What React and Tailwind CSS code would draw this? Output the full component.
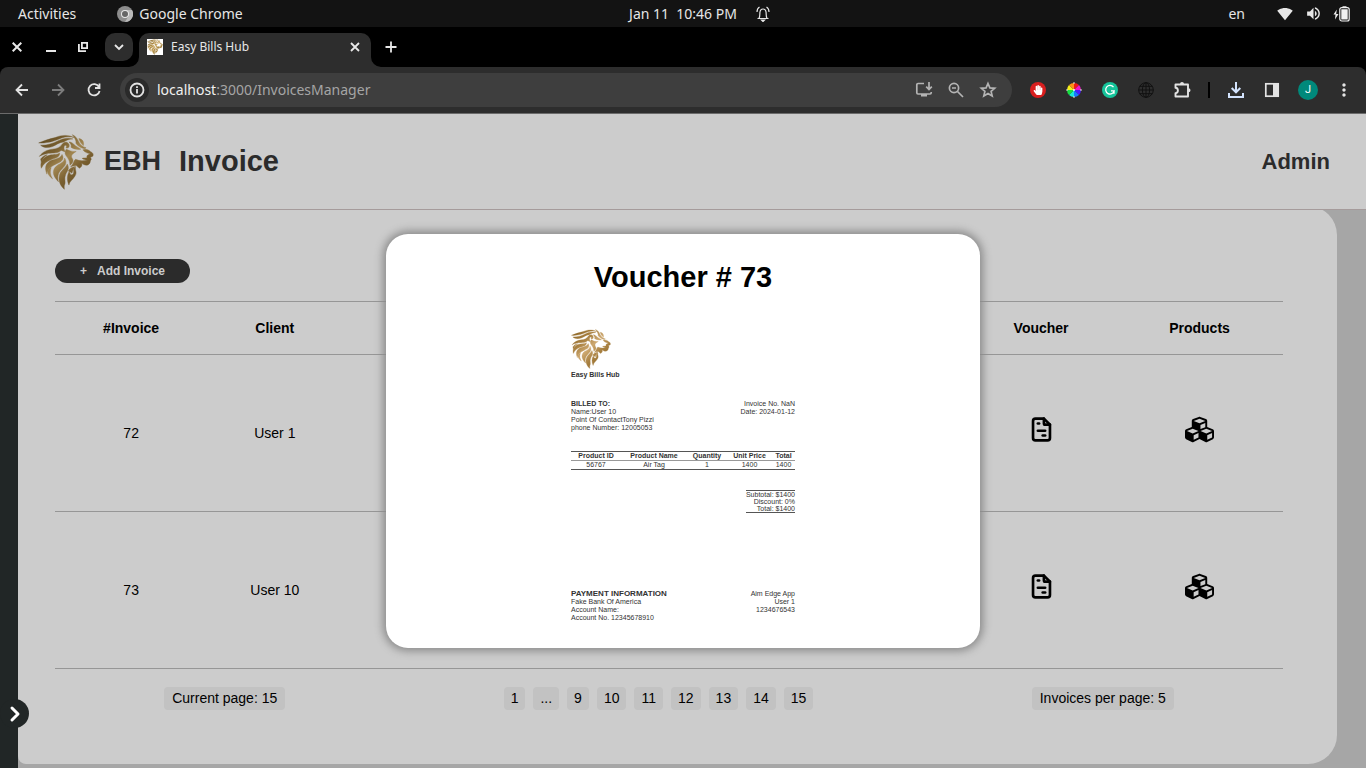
import React from "react";
import { MdMoreVert, MdSignalWifi4Bar, MdVolumeUp } from "react-icons/md";
import { FaCubes, FaHandPaper } from "react-icons/fa";
import { TbFileInvoice } from "react-icons/tb";
import { FiChevronRight } from "react-icons/fi";

const pages = ["1", "...", "9", "10", "11", "12", "13", "14", "15"];
const invoices = [
  { id: 72, client: "User 1" },
  { id: 73, client: "User 10" },
];

const glyphs = {
  back: "M14 8H3M8 2.500 2.500 8 8 13.500",
  forward: "M2 8h11M8 2.500 13.500 8 8 13.500",
  reload: "M13 5A5.600 5.600 0 1 0 13.600 9M13.500 1.500V6H9",
  info: "M8 1.500a6.500 6.500 0 1 0 0 13a6.500 6.500 0 0 0 0-13ZM8 7v4.500M8 4.300v1.700",
  close: "M4 4l8 8M12 4l-8 8",
  plus: "M8 2.500v11M2.500 8h11",
  down: "M4 6l4 4 4-4",
};

function Glyph({ name, className = "size-4" }) {
  return (
    <svg viewBox="0 0 16 16" className={className} fill="none" stroke="currentColor" strokeWidth="1.8" aria-hidden="true">
      <path d={glyphs[name]} />
    </svg>
  );
}

function Lion({ className, id, dark, mid, light }) {
  return (
    <svg viewBox="40 26 170 170" className={className} aria-hidden="true">
      <defs>
        <linearGradient id={id} gradientUnits="userSpaceOnUse" x1="40" y1="40" x2="180" y2="190">
          <stop offset="0" stopColor={dark} />
          <stop offset="0.3" stopColor={mid} />
          <stop offset="0.5" stopColor={light} />
          <stop offset="0.7" stopColor={mid} />
          <stop offset="1" stopColor={dark} />
        </linearGradient>
      </defs>
      <g fill={`url(#${id})`} stroke={`url(#${id})`} strokeWidth="1.2" strokeLinejoin="round">
        <path d="M42 53C60 46 74 41 92 37C112 28 134 28 150 37C138 33 124 34 112 38C96 44 84 50 66 52C56 54 49 54 42 53Z" />
        <path d="M48 60C66 61 84 55 100 47C112 41 130 36 146 41C134 41 124 46 118 50C104 51 94 60 84 64C70 69 56 68 48 60Z" />
        <path d="M44 94C54 80 68 74 84 72C98 71 108 66 114 56C120 49 130 49 134 57C137 65 132 71 125 68C128 64 127 59 122 60C117 64 118 73 123 80C114 78 111 74 109 77C98 87 80 82 66 86C56 88 49 91 44 94Z" />
        <path d="M144 28C154 32 160 40 164 50C168 58 176 65 186 68L182 71C170 69 160 62 155 54C157 47 151 36 144 28Z" />
        <path d="M164 40C176 42 180 50 178 61C172 57 167 50 164 40Z" />
        <path d="M134 50C142 50 148 56 154 62L170 72C160 74 148 72 140 66C143 61 139 55 134 50Z" />
        <path d="M176 74C186 70 194 74 200 80C206 82 209 87 207 93L199 97C202 100 203 104 199 107C199 112 197 117 191 120C184 122 176 118 172 114C176 121 171 127 166 130L156 122C150 124 144 122 139 126C149 116 148 107 154 103C166 108 178 108 190 105C184 104 178 103 174 100C178 98 184 99 189 98C186 91 194 88 199 86C191 85 182 82 176 74Z" />
        <path d="M126 72C134 76 142 80 156 79C146 85 139 90 143 99C150 107 145 115 137 121C137 105 129 98 124 90C121 84 122 77 126 72Z" />
        <path d="M50 130C45 112 55 98 70 92C82 87 96 91 106 84C106 98 92 99 79 104C66 109 56 117 50 130Z" />
        <path d="M48 102C53 95 60 91 68 89C59 95 54 101 50 112Z" />
        <path d="M67 148C57 124 67 111 83 105C95 101 108 100 113 88C122 103 110 111 97 116C82 123 70 131 67 148Z" />
        <path d="M84 162C65 147 66 136 80 128C75 143 79 153 84 162Z" />
        <path d="M102 171C82 151 82 133 99 121C108 115 119 112 121 99C131 116 119 125 112 133C101 143 98 156 102 171Z" />
        <path d="M120 194C104 180 101 162 106 148C109 137 123 130 129 117C137 132 128 139 124 149C118 163 126 173 120 182C119 185 120 189 120 194Z" />
        <path d="M134 181C128 168 127 153 135 139C137 150 143 153 147 147C151 138 143 131 154 127C152 138 160 142 152 154C145 166 135 170 134 181Z" />
        <path d="M132 138C136 129 146 126 154 125C147 130 146 137 143 145C139 141 136 140 132 138Z" />
      </g>
    </svg>
  );
}

function SystemBar() {
  return (
    <div className="grid h-[27px] grid-cols-[1fr_auto_1fr] items-center bg-[#131313] text-sm text-[#e6e6e6]">
      <div className="flex items-center pl-[18px]">
        <button>Activities</button>
        <button className="ml-[41px] flex items-center gap-1.5">
          <svg viewBox="0 0 16 16" className="size-4" aria-hidden="true">
            <circle cx="8" cy="8" r="8" fill="#8d8d8d" />
            <path d="M8 4h7A8 8 0 0 1 8 16l3.500-6Z" fill="#b9b9b9" />
            <circle cx="8" cy="8" r="4" fill="#e8e8e8" />
            <circle cx="8" cy="8" r="3" fill="#666" />
          </svg>
          Google Chrome
        </button>
      </div>
      <time className="whitespace-pre">Jan 11  10:46 PM</time>
      <div className="flex items-center pl-[19px] pr-4">
        <svg viewBox="0 0 14 16" className="h-4 w-3.5" fill="none" stroke="#e6e6e6" strokeWidth="1.2" aria-hidden="true">
          <path d="M1.5 12.5h11M3 12.5c1-2 .8-4 .9-6 .2-2 1.300-3.500 3.100-3.500s2.900 1.500 3.100 3.500c.1 2-.1 4 .9 6M1 6c0-2 .8-4 2.500-5M13 6c0-2-.8-4-2.500-5" />
          <path d="M5.500 14h3L7 15.500Z" fill="#e6e6e6" />
        </svg>
        <span className="ml-auto">en</span>
        <MdSignalWifi4Bar className="ml-8 size-4" />
        <MdVolumeUp className="ml-3 size-[17px]" />
        <svg viewBox="0 0 17 16" className="ml-[11px] h-4 w-[17px]" aria-hidden="true">
          <path d="M3.800 3.500.5 8.500h2l-.5 5 3.500-5.500H3.200Z" fill="#f0f0f0" />
          <rect x="6.800" y="1.600" width="9.400" height="13.400" rx="2" fill="none" stroke="#f0f0f0" strokeWidth="1.200" />
          <path d="M9.500 0.200h4V2h-4ZM8.300 3.300h6.400v10.200H8.300Z" fill="#f0f0f0" />
        </svg>
      </div>
    </div>
  );
}

function TabStrip() {
  return (
    <div className="flex h-10 items-center bg-black text-[#e8e8e8]">
      <button aria-label="Close window" className="flex w-[34px] justify-center">
        <svg viewBox="0 0 10 10" className="size-2.5" stroke="currentColor" strokeWidth="2">
          <path d="M.7.7l8.600 8.600M9.300.7.7 9.300" />
        </svg>
      </button>
      <button aria-label="Minimize" className="flex w-[34px] justify-center pt-2">
        <span className="h-0.5 w-2.5 bg-[#e8e8e8]" />
      </button>
      <button aria-label="Restore" className="flex w-[30px] justify-center">
        <svg viewBox="0 0 10 10" className="size-2.5" fill="none" stroke="currentColor" strokeWidth="1.800">
          <path d="M3.900.9h5.200v5.200H3.900ZM.9 2v7.100H8" />
        </svg>
      </button>
      <button aria-label="Search tabs" className="ml-[7px] flex size-7 items-center justify-center rounded-[10px] bg-[#2d2d2d]">
        <Glyph name="down" />
      </button>
      <div className="relative ml-1.5 flex h-[34px] w-[232px] items-center self-end rounded-t-[10px] bg-[#2d2d2d] pb-1.5 pl-2 pr-2 pt-0">
        <svg viewBox="0 0 10 10" className="absolute -left-2.5 bottom-0 size-2.5" fill="#2d2d2d" aria-hidden="true">
          <path d="M10 0v10H0A10 10 0 0 0 10 0Z" />
        </svg>
        <svg viewBox="0 0 10 10" className="absolute -right-2.5 bottom-0 size-2.5" fill="#2d2d2d" aria-hidden="true">
          <path d="M0 0v10h10A10 10 0 0 1 0 0Z" />
        </svg>
        <span className="bg-white">
          <Lion id="lion-tab" className="size-4" dark="#7a5c22" mid="#a8843c" light="#c4a05a" />
        </span>
        <span className="ml-2 text-xs">Easy Bills Hub</span>
        <button aria-label="Close tab" className="ml-auto">
          <Glyph name="close" />
        </button>
      </div>
      <button aria-label="New tab" className="ml-3">
        <Glyph name="plus" />
      </button>
    </div>
  );
}

function Slot({ label, children }) {
  return (
    <button aria-label={label} className="flex w-9 shrink-0 items-center justify-center">
      {children}
    </button>
  );
}

function Toolbar() {
  return (
    <div className="bg-black">
      <div className="flex h-[47px] items-center rounded-t-lg border-b border-[#6b6b6b] bg-[#2d2d2d] px-1 text-[#e3e3e3]">
        <Slot label="Back"><Glyph name="back" /></Slot>
        <Slot label="Forward"><Glyph name="forward" className="size-4 text-[#7c7c7c]" /></Slot>
        <Slot label="Reload"><Glyph name="reload" /></Slot>
        <div className="mx-2 flex h-[34px] min-w-0 flex-1 items-center rounded-full bg-[#3e3e3e] pl-[5px] pr-2">
          <button aria-label="Site information" className="flex size-6 items-center justify-center rounded-full bg-[#2a2a2a]">
            <Glyph name="info" />
          </button>
          <a href="#address" className="ml-2 text-sm text-[#a5a5a5]">
            <span className="text-[#f0f0f0]">localhost</span>:3000/InvoicesManager
          </a>
          <div className="ml-auto flex text-[#b4b4b4]">
            <button aria-label="Install app" className="flex w-8 justify-center">
              <svg viewBox="0 0 18 18" className="size-[18px]" fill="none" stroke="currentColor" strokeWidth="1.700">
                <path d="M9 2.500H3A1.200 1.200 0 0 0 1.800 3.700v8.100A1.200 1.200 0 0 0 3 13h12a1.200 1.200 0 0 0 1.200-1.200V11M14 1v7M11.200 5.700 14 8.500l2.800-2.800" />
                <path d="M6 13h6v2.500H6Z" fill="currentColor" stroke="none" />
              </svg>
            </button>
            <button aria-label="Zoom" className="flex w-8 justify-center">
              <svg viewBox="0 0 18 18" className="size-[18px]" fill="none" stroke="currentColor" strokeWidth="1.700">
                <circle cx="7" cy="7" r="4.600" />
                <path d="m10.500 10.500 5.500 5.500M5 7h4" />
              </svg>
            </button>
            <button aria-label="Bookmark" className="flex w-8 justify-center">
              <svg viewBox="0 0 18 18" className="size-[18px]" fill="none" stroke="currentColor" strokeWidth="1.700">
                <path d="m9 2.500 1.900 4.400 4.800.4-3.600 3.100 1.100 4.700L9 12.600l-4.200 2.500 1.100-4.700-3.600-3.100 4.800-.4Z" />
              </svg>
            </button>
          </div>
        </div>
        <Slot label="Ad blocker">
          <span className="flex size-4 items-center justify-center rounded-full bg-[#d81e1e]">
            <FaHandPaper className="size-2.5 text-white" />
          </span>
        </Slot>
        <Slot label="Color picker">
          <svg viewBox="0 0 16 16" className="size-4">
            <path d="M8 8V1a7 7 0 0 1 5 2Z" fill="#f01818" />
            <path d="M8 8l5-5a7 7 0 0 1 2 5Z" fill="#f018c8" />
            <path d="M8 8h7a7 7 0 0 1-2 5Z" fill="#4a18ff" />
            <path d="M8 8l5 5a7 7 0 0 1-5 2Z" fill="#1878ff" />
            <path d="M8 8v7a7 7 0 0 1-5-2Z" fill="#18e8d8" />
            <path d="M8 8l-5 5a7 7 0 0 1-2-5Z" fill="#18e040" />
            <path d="M8 8H1a7 7 0 0 1 2-5Z" fill="#f4f018" />
            <path d="M8 8 3 3a7 7 0 0 1 5-2Z" fill="#ff9018" />
            <path d="M8 0v2M8 14v2M0 8h2M14 8h2" stroke="#ddd" />
            <circle cx="8" cy="8" r="1" fill="#fff" />
          </svg>
        </Slot>
        <Slot label="Grammar">
          <svg viewBox="0 0 16 16" className="size-4">
            <circle cx="8" cy="8" r="8" fill="#15c39a" />
            <path d="M11.500 5.200A4.300 4.300 0 1 0 12.200 8.800H9M12 8.800v3" fill="none" stroke="#fff" strokeWidth="1.300" />
          </svg>
        </Slot>
        <Slot label="Globe">
          <svg viewBox="0 0 16 16" className="size-4" fill="none" stroke="#111" strokeWidth="1">
            <circle cx="8" cy="8" r="7.300" />
            <ellipse cx="8" cy="8" rx="3.600" ry="7.300" />
            <path d="M8 .7v14.600M.7 8h14.600M1.800 4.300h12.400M1.800 11.700h12.400" />
          </svg>
        </Slot>
        <Slot label="Extensions">
          <svg viewBox="0 0 18 18" className="size-[18px]" fill="none" stroke="currentColor" strokeWidth="1.900">
            <path d="M2.500 3.500H15v12H2.500v-3.200c3.200-.3 3.200-5.200 0-5.500Z" strokeLinejoin="round" />
            <path d="M7 3a2 2 0 0 1 4 0ZM15.500 7.300a2 2 0 0 1 0 4Z" fill="currentColor" stroke="none" />
          </svg>
        </Slot>
        <span className="mx-2 h-4 w-0.5 shrink-0 bg-black" />
        <Slot label="Downloads">
          <svg viewBox="0 0 18 18" className="size-[18px] text-[#d3e3fd]" fill="none" stroke="currentColor" strokeWidth="2">
            <path d="M9 1v10M4.700 7 9 11.300 13.300 7M2 12v4h14v-4" />
          </svg>
        </Slot>
        <Slot label="Side panel">
          <svg viewBox="0 0 16 16" className="size-4" aria-hidden="true">
            <rect x="1.800" y="1.800" width="12.400" height="12.400" fill="none" stroke="#e3e3e3" strokeWidth="1.700" />
            <path d="M9 2h5v12H9Z" fill="#e3e3e3" />
          </svg>
        </Slot>
        <Slot label="Profile">
          <span className="flex size-5 items-center justify-center rounded-full bg-[#00897b] font-[Roboto,sans-serif] text-[11px] text-white">J</span>
        </Slot>
        <Slot label="Menu"><MdMoreVert className="size-5" /></Slot>
      </div>
    </div>
  );
}

function Chip({ children }) {
  return <span className="rounded bg-[#c2c2c2] px-2 leading-[23px]">{children}</span>;
}

function InvoiceTable() {
  const line = "border-b border-[#969696]";
  return (
    <table className="w-full table-fixed border-collapse border-t border-[#969696] text-center">
      <colgroup>
        <col className="w-[12.4%]" />
        <col className="w-[11%]" />
        <col />
        <col className="w-[12.2%]" />
        <col className="w-[13.6%]" />
      </colgroup>
      <thead>
        <tr className={`h-[53px] ${line}`}>
          <th>#Invoice</th>
          <th>Client</th>
          <td />
          <th>Voucher</th>
          <th>Products</th>
        </tr>
      </thead>
      <tbody>
        {invoices.map((invoice) => (
          <tr key={invoice.id} className={`h-[157px] ${line}`}>
            <td>{invoice.id}</td>
            <td>{invoice.client}</td>
            <td />
            <td>
              <button aria-label="View voucher" className="pb-2 align-middle">
                <TbFileInvoice className="size-[29px]" strokeWidth="2.2" />
              </button>
            </td>
            <td>
              <button aria-label="View products" className="pb-2 align-middle">
                <FaCubes className="size-[29px]" />
              </button>
            </td>
          </tr>
        ))}
      </tbody>
    </table>
  );
}

function VoucherDocument() {
  return (
    <div className="mx-auto w-56 text-[7px] leading-[8px] text-[#333]">
      <Lion id="lion-voucher" className="size-10" dark="#8a6424" mid="#a88040" light="#cda870" />
      <p className="mt-0.5 font-bold">Easy Bills Hub</p>
      <div className="mt-[21px] flex justify-between">
        <div>
          <p className="font-bold">BILLED TO:</p>
          <p>Name:User 10</p>
          <p>Point Of ContactTony Pizzi</p>
          <p>phone Number: 12005053</p>
        </div>
        <div className="text-right">
          <p>Invoice No. NaN</p>
          <p>Date: 2024-01-12</p>
        </div>
      </div>
      <table className="mt-[19px] w-full table-fixed border-collapse border-y border-[#555] text-center">
        <colgroup>
          <col className="w-[50px]" />
          <col className="w-[66px]" />
          <col className="w-10" />
          <col className="w-[45px]" />
          <col className="w-[23px]" />
        </colgroup>
        <thead>
          <tr className="whitespace-nowrap border-b border-[#999]">
            <th>Product ID</th>
            <th>Product Name</th>
            <th>Quantity</th>
            <th>Unit Price</th>
            <th>Total</th>
          </tr>
        </thead>
        <tbody>
          <tr>
            <td>56767</td>
            <td>Air Tag</td>
            <td>1</td>
            <td>1400</td>
            <td>1400</td>
          </tr>
        </tbody>
      </table>
      <div className="ml-auto mt-5 w-fit border-y border-[#555] text-right leading-[7px]">
        <p>Subtotal: $1400</p>
        <p>Discount: 0%</p>
        <p>Total: $1400</p>
      </div>
      <div className="mt-[77px] flex justify-between">
        <div>
          <p className="text-[8px] font-bold">PAYMENT INFORMATION</p>
          <p>Fake Bank Of America</p>
          <p>Account Name:</p>
          <p>Account No. 12345678910</p>
        </div>
        <div className="text-right">
          <p>Aim Edge App</p>
          <p>User 1</p>
          <p>1234676543</p>
        </div>
      </div>
    </div>
  );
}

export default function App() {
  return (
    <div className="flex min-h-screen flex-col bg-[#a6a6a6] font-['Noto_Sans',sans-serif]">
      <SystemBar />
      <TabStrip />
      <Toolbar />
      <div className="relative flex flex-1 font-['Liberation_Sans',Arial,sans-serif] text-sm text-black">
        <aside className="relative z-10 w-[18px] shrink-0 bg-[#212626]">
          <button aria-label="Open menu" className="absolute bottom-10 left-0 flex size-[29px] items-center justify-center rounded-full bg-[#212626] text-white">
            <FiChevronRight className="size-6" strokeWidth="3" />
          </button>
        </aside>
        <div className="flex min-w-0 flex-1 flex-col">
          <header className="relative flex h-24 items-center border-b border-[#a59b9b] bg-[#ccc] pl-5 pr-9 font-bold text-[#2b2b2b]">
            <Lion id="lion-header" className="size-14" dark="#5f4a22" mid="#7a6030" light="#a08550" />
            <span className="ml-2.5 text-[27px]">EBH</span>
            <h1 className="ml-[18px] text-[29px]">Invoice</h1>
            <span className="ml-auto text-[22px]">Admin</span>
          </header>
          <main className="flex flex-1 overflow-hidden">
            <div className="-mt-1 mb-1 mr-[29px] min-w-0 flex-1 rounded-r-[29px] rounded-bl-lg bg-[#ccc] pl-[37px] pr-[54px] pt-[53px]">
              <button className="mb-[18px] flex h-6 items-center gap-2.5 rounded-full bg-[#2b2b2b] px-[25px] text-xs font-bold text-[#ccc]">
                <span>+</span>
                <span>Add Invoice</span>
              </button>
              <InvoiceTable />
              <div className="mt-[18px] flex items-center justify-around">
                <Chip>Current page: 15</Chip>
                <nav className="flex gap-2">
                  {pages.map((page) => (
                    <button key={page} className="rounded bg-[#c2c2c2] px-[7px] leading-[23px]">
                      {page}
                    </button>
                  ))}
                </nav>
                <Chip>Invoices per page: 5</Chip>
              </div>
            </div>
          </main>
        </div>
        <div className="pointer-events-none absolute inset-0 z-20 flex items-center justify-center">
          <section role="dialog" aria-label="Voucher" className="pointer-events-auto w-[594px] rounded-[22px] bg-white pb-[26px] pt-[26px] shadow-[0_0_8px_3px_#8a8a8a]">
            <h2 className="mb-[35px] text-center text-[29px] font-bold leading-[34px]">Voucher # 73</h2>
            <VoucherDocument />
          </section>
        </div>
      </div>
    </div>
  );
}
